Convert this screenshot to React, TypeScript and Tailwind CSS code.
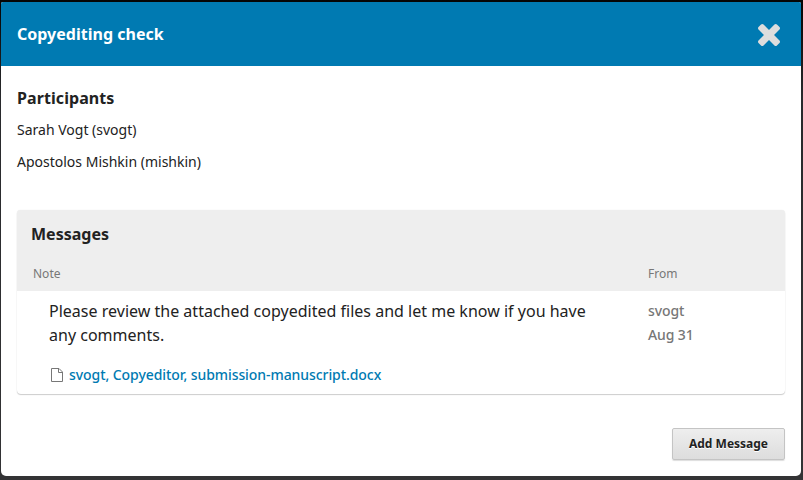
export default function App() {
  return (
    <div className="h-[480px] w-[803px] overflow-hidden bg-linear-to-b from-[#050505] via-[#28292c] via-20% to-[#333335] pl-px pt-0.5 font-['Noto_Sans',sans-serif] text-[#222]">
      <div className="flex h-[474px] w-[800px] flex-col overflow-hidden rounded-t-[2px] rounded-b-[5px] bg-white">
        <header className="flex h-16 shrink-0 items-center justify-between bg-[#007ab2] pl-4 pr-[21px] text-white">
          <h1 className="text-[16px] font-bold leading-6 tracking-[0.02px]">Copyediting check</h1>
          <button aria-label="Close" className="mt-px text-[#ddd]">
            <svg width="22" height="22" viewBox="110 366 1188 1188" fill="currentColor"><path d="M1298 1322q0 40-28 68l-136 136q-28 28-68 28t-68-28l-294-294-294 294q-28 28-68 28t-68-28l-136-136q-28-28-28-68t28-68l294-294-294-294q-28-28-28-68t28-68l136-136q28-28 68-28t68 28l294 294 294-294q28-28 68-28t68 28l136 136q28 28 28 68t-28 68l-294 294 294 294q28 28 28 68z" /></svg>
          </button>
        </header>
        <main className="px-4 pt-5">
          <h2 className="text-[16px] font-bold leading-6 tracking-[0.08px]">Participants</h2>
          <p className="mt-2 text-[14px] leading-6">Sarah Vogt (svogt)</p>
          <p className="mt-2 text-[14px] leading-6">Apostolos Mishkin (mishkin)</p>
          <section className="mt-9 h-[184px] w-[768px] rounded-sm shadow-[0_1px_1px_#ccc,0_0_1px_#ddd]">
            <div className="h-[81px] rounded-t-[3px] bg-[#eee] pt-3">
              <h2 className="pl-[14px] text-[16px] font-bold leading-6">Messages</h2>
              <div className="mt-4 flex pl-4 text-[12px] leading-6 text-[#777]"><span className="w-[615px]">Note</span><span>From</span></div>
            </div>
            <div className="flex pl-8 pt-2">
              <div className="w-[599px]">
                <p className="w-[560px] text-[16px] leading-6 tracking-[0.01px]">Please review the attached copyedited files and let me know if you have any comments.</p>
                <a className="mt-4 flex items-center text-[14px] font-medium leading-6 tracking-[-0.07px] text-[#007ab2]"><svg className="ml-[2px] mr-[6px]" width="12" height="14" viewBox="0 0 12 14" fill="none" stroke="#777"><path d="M.5 .5H8L11.5 4V13.5H.5ZM7.5 .5V4.5H11.5" /></svg>svogt, Copyeditor, submission-manuscript.docx</a>
              </div>
              <div className="text-[14px] font-medium leading-6 tracking-[-0.12px] text-[#777]"><p>svogt</p><p>Aug 31</p></div>
            </div>
          </section>
          <div className="mt-[34px] flex justify-end"><button className="h-8 w-[113px] rounded-[2px] border border-[#c4c4c4] bg-linear-to-b from-[#eee] to-[#ddd] text-[12px] font-bold shadow-[0_1px_1px_#ddd] [text-shadow:0_1px_0_white]">Add Message</button></div>
        </main>
      </div>
    </div>
  );
}
